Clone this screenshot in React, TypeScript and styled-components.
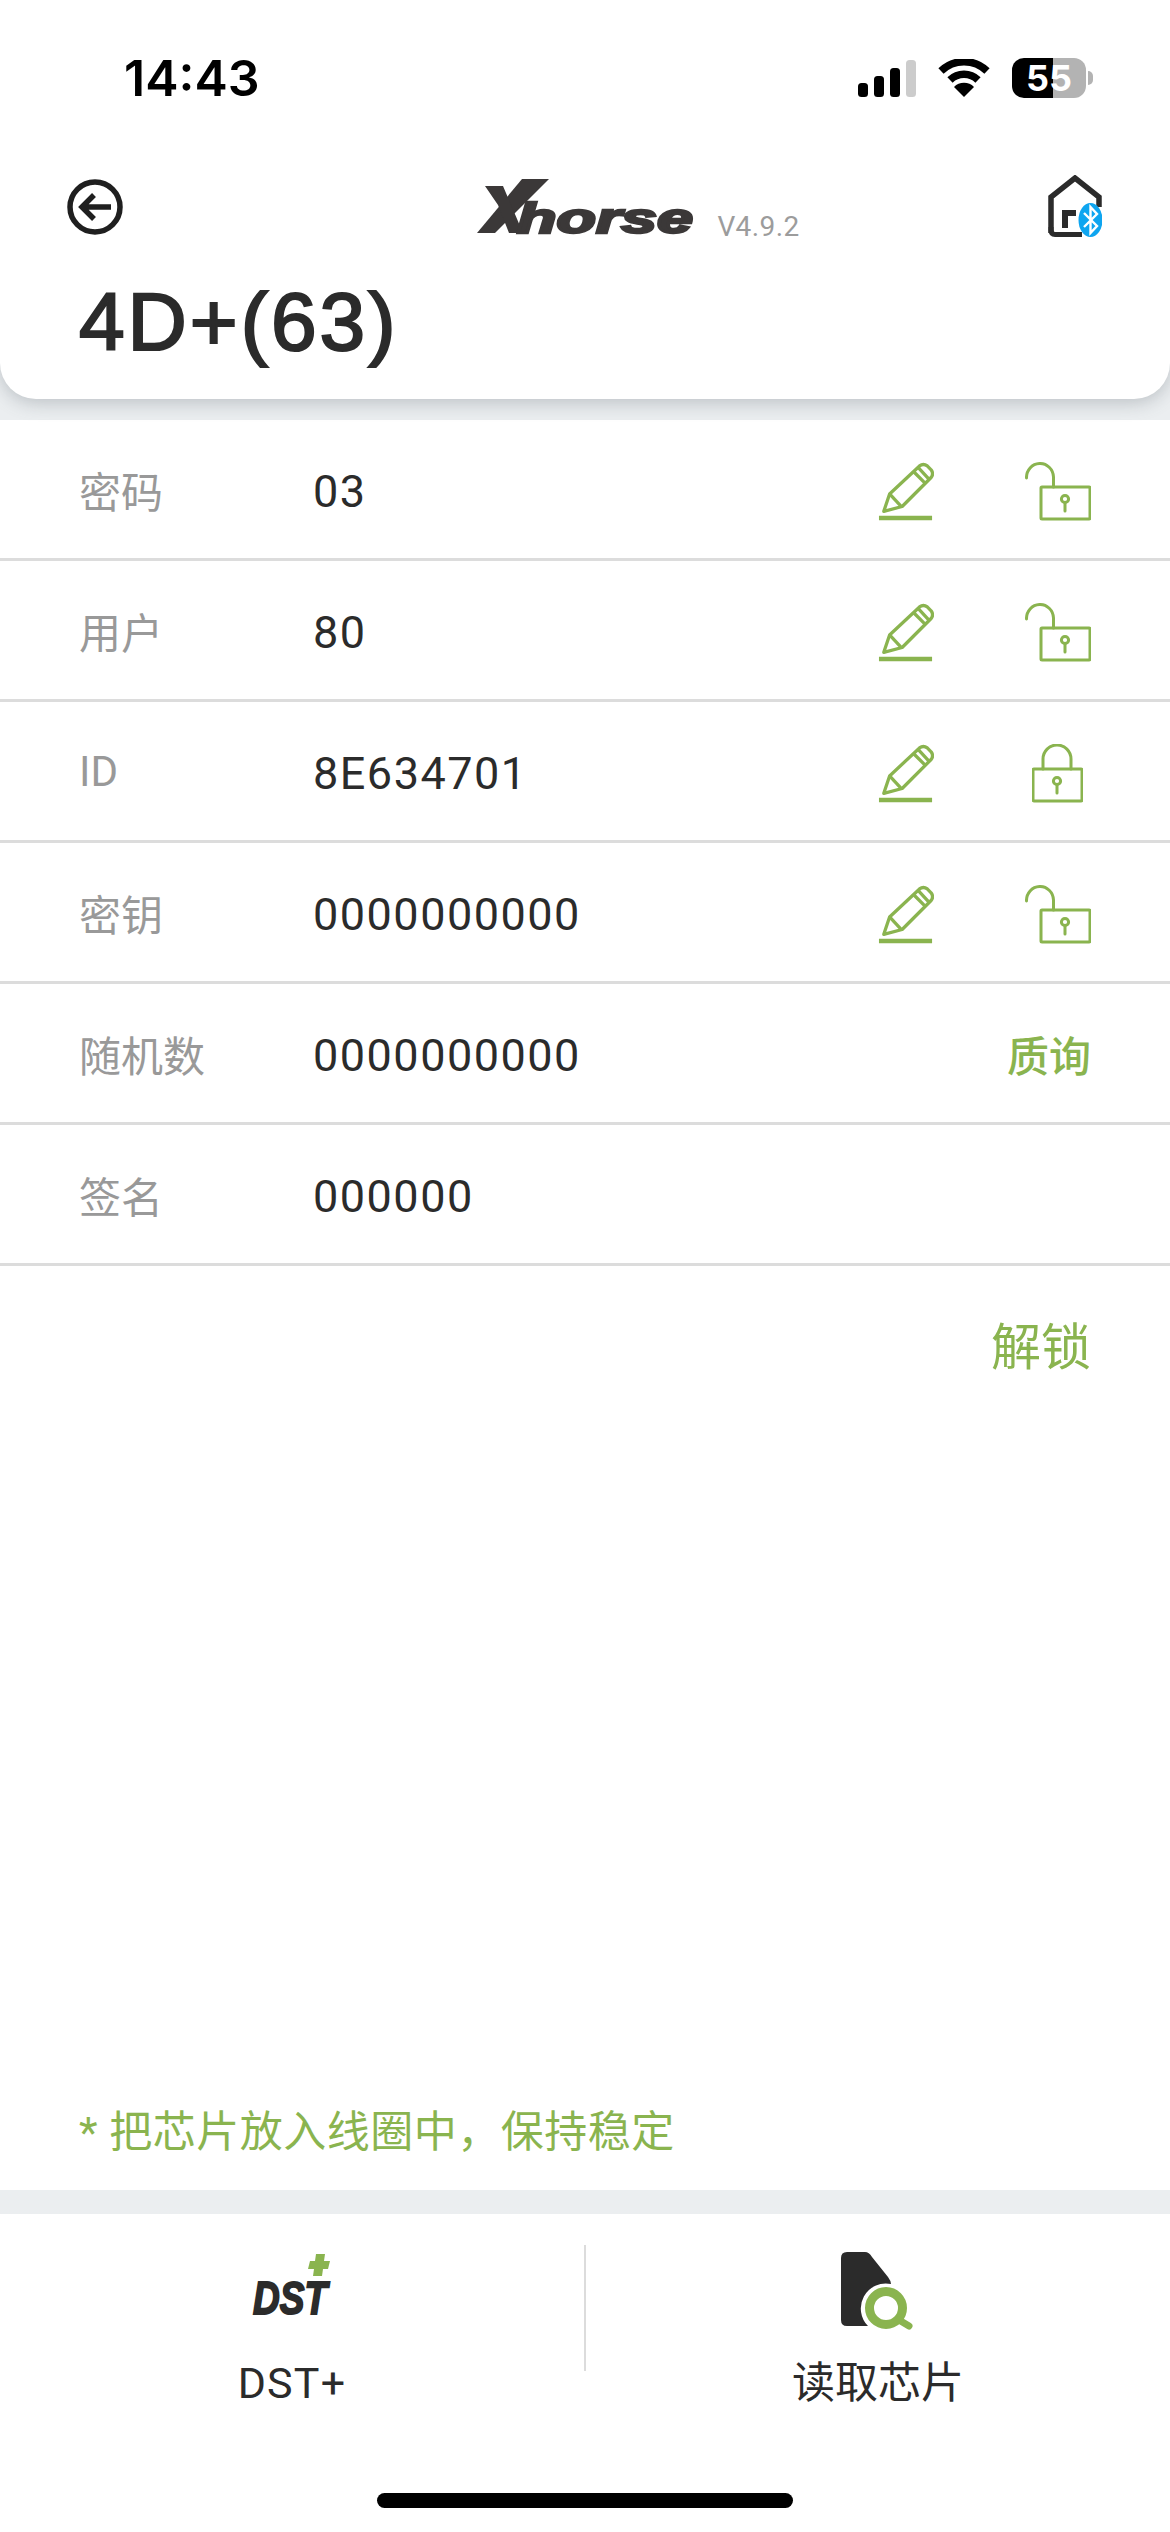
import React from "react";
import styled, { createGlobalStyle } from "styled-components";

const GREEN = "#8ab44f";
const DARK = "#2b2b2b";

const GlobalStyle = createGlobalStyle`
  html, body {
    margin: 0;
    padding: 0;
    background: #fff;
  }
  body {
    font-family: Roboto, "Noto Sans CJK SC", sans-serif;
  }
`;

const Page = styled.div`
  width: 1170px;
  height: 2532px;
  display: flex;
  flex-direction: column;
  background: #fff;
  overflow: hidden;
  position: relative;
`;

const HeaderWrap = styled.div`
  height: 420px;
  flex: none;
  background: #ebeef0;
`;

const Header = styled.header`
  height: 399px;
  background: #fff;
  border-radius: 0 0 36px 36px;
  box-shadow: 0 4px 18px rgba(90, 100, 110, 0.32);
  display: flex;
  flex-direction: column;
`;

const StatusBar = styled.div`
  height: 172px;
  padding: 52px 84px 0 124px;
  box-sizing: border-box;
  display: flex;
  justify-content: space-between;
  align-items: flex-start;
`;

const Clock = styled.span`
  font-family: Inter, sans-serif;
  font-weight: 600;
  font-size: 50px;
  line-height: 52px;
  color: #000;
`;

const StatusIcons = styled.div`
  display: flex;
  align-items: center;
  gap: 22px;
  padding-top: 6px;
`;

const Battery = styled.div`
  width: 74px;
  height: 40px;
  border-radius: 12px;
  background: linear-gradient(90deg, #000 0 55%, #b3b3b3 55% 100%);
  color: #fff;
  font-family: Inter, sans-serif;
  font-weight: 700;
  font-size: 36px;
  line-height: 40px;
  text-align: center;
  position: relative;
  &::after {
    content: "";
    position: absolute;
    right: -7px;
    top: 13px;
    width: 5px;
    height: 14px;
    border-radius: 0 7px 7px 0;
    background: #b3b3b3;
  }
`;

const NavRow = styled.div`
  display: flex;
  align-items: flex-start;
  justify-content: space-between;
  padding: 7px 68px 0 67px;
`;

const Brand = styled.div`
  display: flex;
  align-items: flex-end;
  gap: 22px;
  margin-left: 106px;
`;

const Version = styled.span`
  font-size: 28px;
  line-height: 28px;
  color: #9c9c9c;
  letter-spacing: 0.4px;
  margin-bottom: -6px;
`;

const HomeSlot = styled.div`
  margin-top: -4px;
  display: flex;
`;

const Title = styled.h1`
  margin: 41px 0 0 79px;
  font-family: "Liberation Sans", sans-serif;
  font-weight: 400;
  -webkit-text-stroke: 2.2px ${DARK};
  font-size: 82px;
  letter-spacing: 3px;
  line-height: 88px;
  color: ${DARK};
`;

const Rows = styled.div`
  display: flex;
  flex-direction: column;
`;

const Row = styled.div`
  height: 141px;
  box-sizing: border-box;
  border-bottom: 3px solid #dcdcdc;
  padding: 0 79px;
  display: flex;
  align-items: center;
`;

const Label = styled.span`
  width: 234px;
  flex: none;
  font-size: 42px;
  color: #999;
`;

const Value = styled.span`
  flex: 1;
  font-size: 45px;
  letter-spacing: 1.5px;
  color: ${DARK};
  padding-top: 5px;
`;

const Actions = styled.div`
  display: flex;
  align-items: center;
  padding-top: 6px;
`;

const EditSlot = styled.div`
  width: 56px;
  display: flex;
`;

const LockSlot = styled.div<{ $closed?: boolean }>`
  width: 157px;
  display: flex;
  justify-content: flex-end;
  padding-right: ${(p) => (p.$closed ? "8px" : "0")};
  box-sizing: border-box;
`;

const Challenge = styled.span`
  font-size: 42px;
  font-weight: 500;
  color: ${GREEN};
`;

const UnlockRow = styled.div`
  padding: 50px 79px 0;
  text-align: right;
  font-size: 50px;
  line-height: 64px;
  color: ${GREEN};
`;

const Hint = styled.div`
  margin-top: auto;
  padding: 0 79px 30px;
  font-size: 43px;
  letter-spacing: 0.5px;
  line-height: 56px;
  color: ${GREEN};
`;

const Divider = styled.div`
  height: 24px;
  flex: none;
  background: #ebeef0;
`;

const Footer = styled.footer`
  height: 318px;
  flex: none;
  display: flex;
  padding-top: 31px;
  box-sizing: border-box;
`;

const Tool = styled.div`
  flex: 1;
  display: flex;
  flex-direction: column;
  align-items: center;
`;

const ToolIcon = styled.div<{ $top: number }>`
  height: 100px;
  box-sizing: border-box;
  padding-top: ${(p) => p.$top}px;
  margin-bottom: 10px;
  display: flex;
  align-items: flex-start;
`;

const ToolLabel = styled.span<{ $spacing?: number }>`
  color: ${DARK};
  font-size: 43px;
  line-height: 56px;
  letter-spacing: ${(p) => p.$spacing ?? 0}px;
`;

const VLine = styled.div`
  width: 2px;
  height: 126px;
  background: #dcdcdc;
  flex: none;
`;

const HomeBar = styled.div`
  position: absolute;
  left: 377px;
  top: 2493px;
  width: 416px;
  height: 15px;
  border-radius: 8px;
  background: #000;
`;

const LogoWord = styled.text`
  font-family: "Liberation Sans", sans-serif;
  font-weight: 700;
  font-style: italic;
`;

const DstWord = styled.text`
  font-family: "Liberation Sans", sans-serif;
  font-weight: 700;
  font-style: italic;
`;

const Signal = () => (
  <svg width="58" height="37" viewBox="0 0 58 37">
    <rect x="0" y="23" width="10" height="14" rx="3.5" fill="#000" />
    <rect x="16" y="16" width="10" height="21" rx="3.5" fill="#000" />
    <rect x="32" y="8" width="10" height="29" rx="3.5" fill="#000" />
    <rect x="48" y="0" width="10" height="37" rx="3.5" fill="#ccc" />
  </svg>
);

const Wifi = () => (
  <svg width="52" height="38" viewBox="0 0 52 38">
    <path d="M3 12 A33 33 0 0 1 49 12" fill="none" stroke="#000" strokeWidth="7.5" />
    <path d="M12 21 A20 20 0 0 1 40 21" fill="none" stroke="#000" strokeWidth="7.5" />
    <path d="M16 28 A14 14 0 0 1 36 28 L26 38 Z" fill="#000" />
  </svg>
);

const BackIcon = () => (
  <svg width="56" height="56" viewBox="0 0 56 56" fill="none" stroke="#1f1f1f" strokeWidth="5.5">
    <circle cx="28" cy="28" r="25" />
    <path d="M44 28 H16 M27 16 L15 28 L27 40" />
  </svg>
);

const Logo = () => (
  <svg width="218" height="56" viewBox="0 0 218 56" overflow="visible">
    <polygon points="0,54 18,54 72,0 45,0" fill="#3b3838" />
    <polygon points="8,7 26,7 46,54 32,54 21,26" fill="#3b3838" />
    <LogoWord x="40" y="54" fontSize="42" textLength="176" lengthAdjust="spacingAndGlyphs" fill="#3b3838" stroke="#3b3838" strokeWidth="2.5">
      horse
    </LogoWord>
  </svg>
);

const HomeBluetooth = () => (
  <svg width="54" height="62" viewBox="0 0 54 62">
    <path d="M3 58 V22 L27 3 L51 22 V32" fill="none" stroke={DARK} strokeWidth="5.5" />
    <path d="M3 52 V55 Q3 59.5 7 59.5 H34" fill="none" stroke={DARK} strokeWidth="5" />
    <path d="M17 53 V38 H28" fill="none" stroke={DARK} strokeWidth="6" />
    <ellipse cx="42.5" cy="45" rx="12" ry="17" fill="#0ea5f0" />
    <path d="M36 38 L49 51 L42.5 58 V32 L49 39 L36 52" fill="none" stroke="#fff" strokeWidth="2.4" />
  </svg>
);

const Pencil = () => (
  <svg width="58" height="60" viewBox="0 0 58 60" fill="none" stroke={GREEN} strokeWidth="3.4" strokeLinejoin="round">
    <path d="M6 50 L12 32 L43 3 Q47 0 51 3 L55 7 Q58 11 55 15 L25 45 Z" />
    <path d="M12 32 L24 45" />
    <path d="M37 9 L49 21 M42 5 L53 17" />
    <path d="M1 57 H56" strokeWidth="4.6" />
  </svg>
);

const LockOpen = () => (
  <svg width="66" height="60" viewBox="0 0 66 60" fill="none" stroke={GREEN} strokeWidth="3" strokeLinecap="round" strokeLinejoin="round">
    <path d="M1.5 16 A13.5 14 0 0 1 28.5 15 V25" />
    <rect x="16" y="25" width="49" height="32" rx="1" />
    <circle cx="40" cy="37" r="3.6" />
    <path d="M40 41 V49" />
  </svg>
);

const LockClosed = () => (
  <svg width="51" height="60" viewBox="0 0 51 60" fill="none" stroke={GREEN} strokeWidth="3" strokeLinecap="round" strokeLinejoin="round">
    <path d="M11 25 V15 A14 14 0 0 1 39 15 V25" />
    <rect x="1" y="25" width="49" height="32" rx="1" />
    <circle cx="25" cy="37" r="3.6" />
    <path d="M25 41 V49" />
  </svg>
);

const DstIcon = () => (
  <svg width="80" height="62" viewBox="0 0 80 62" overflow="visible">
    <polygon points="64,0 73,0 72,7 78,7 76,15 71,15 70,22 61,22 62,15 56,15 58,7 63,7" fill={GREEN} />
    <DstWord x="1" y="60" fontSize="47" textLength="74" lengthAdjust="spacingAndGlyphs" fill={DARK} stroke={DARK} strokeWidth="2">
      DST
    </DstWord>
  </svg>
);

const ReadChipIcon = () => (
  <svg width="74" height="78" viewBox="0 0 74 78">
    <path d="M6 0 H24 Q28 0 31 5 L47 25 Q50 29 50 32 A25 25 0 0 0 27 74 H6 Q0 74 0 68 V6 Q0 0 6 0 Z" fill={DARK} />
    <circle cx="45" cy="56" r="16.5" fill="none" stroke={GREEN} strokeWidth="9" />
    <path d="M58 68 L68 74" stroke={GREEN} strokeWidth="7" strokeLinecap="round" />
  </svg>
);

type RowData = { label: string; value: string; lock?: "open" | "closed"; challenge?: boolean };

const rows: RowData[] = [
  { label: "密码", value: "03", lock: "open" },
  { label: "用户", value: "80", lock: "open" },
  { label: "ID", value: "8E634701", lock: "closed" },
  { label: "密钥", value: "0000000000", lock: "open" },
  { label: "随机数", value: "0000000000", challenge: true },
  { label: "签名", value: "000000" },
];

export default function App() {
  return (
    <Page>
      <GlobalStyle />
      <HeaderWrap>
        <Header>
          <StatusBar>
            <Clock>14:43</Clock>
            <StatusIcons>
              <Signal />
              <Wifi />
              <Battery>55</Battery>
            </StatusIcons>
          </StatusBar>
          <NavRow>
            <BackIcon />
            <Brand>
              <Logo />
              <Version>V4.9.2</Version>
            </Brand>
            <HomeSlot>
              <HomeBluetooth />
            </HomeSlot>
          </NavRow>
          <Title>4D+(63)</Title>
        </Header>
      </HeaderWrap>
      <Rows>
        {rows.map((r) => (
          <Row key={r.label}>
            <Label>{r.label}</Label>
            <Value>{r.value}</Value>
            {r.lock && (
              <Actions>
                <EditSlot>
                  <Pencil />
                </EditSlot>
                <LockSlot $closed={r.lock === "closed"}>
                  {r.lock === "open" ? <LockOpen /> : <LockClosed />}
                </LockSlot>
              </Actions>
            )}
            {r.challenge && <Challenge>质询</Challenge>}
          </Row>
        ))}
      </Rows>
      <UnlockRow>解锁</UnlockRow>
      <Hint>* 把芯片放入线圈中，保持稳定</Hint>
      <Divider />
      <Footer>
        <Tool>
          <ToolIcon $top={9}>
            <DstIcon />
          </ToolIcon>
          <ToolLabel $spacing={1.2}>DST+</ToolLabel>
        </Tool>
        <VLine />
        <Tool>
          <ToolIcon $top={7}>
            <ReadChipIcon />
          </ToolIcon>
          <ToolLabel>读取芯片</ToolLabel>
        </Tool>
      </Footer>
      <HomeBar />
    </Page>
  );
}
